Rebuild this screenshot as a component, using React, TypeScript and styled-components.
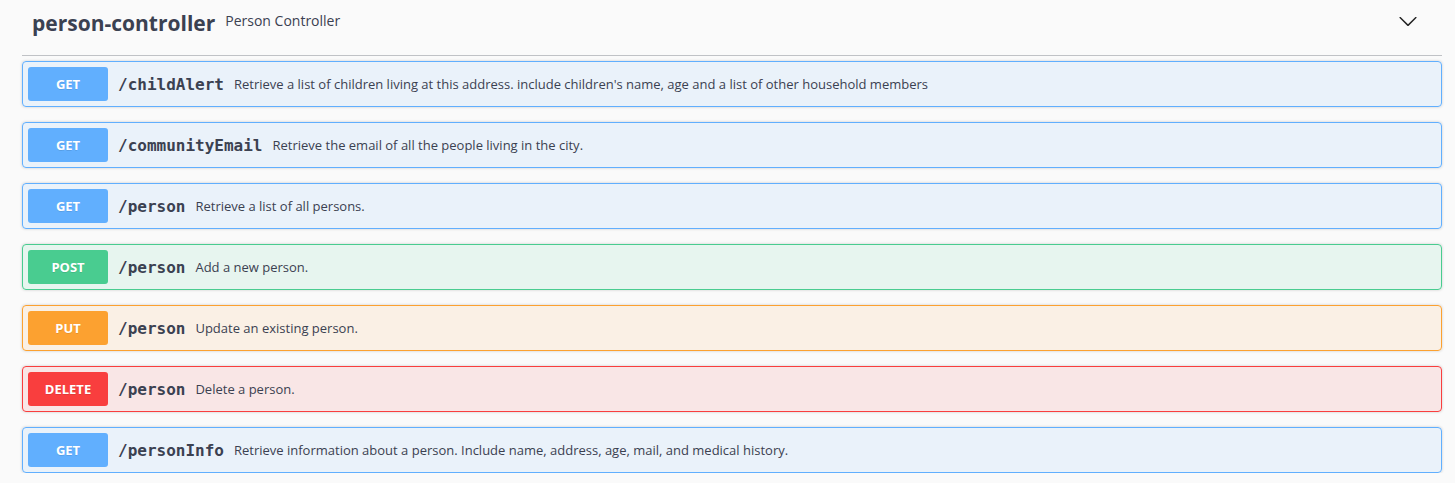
import styled, { createGlobalStyle } from 'styled-components'

const GlobalStyle = createGlobalStyle`
  html, body {
    margin: 0;
    padding: 0;
    background: #fafafa;
  }
  body {
    font-family: "Open Sans", "Noto Sans", sans-serif;
    color: #3b4151;
  }
`

type Method = 'GET' | 'POST' | 'PUT' | 'DELETE'

const colors: Record<Method, string> = {
  GET: '97,175,254',
  POST: '73,204,144',
  PUT: '252,161,48',
  DELETE: '249,62,62',
}

const ops: { method: Method; path: string; desc: string }[] = [
  { method: 'GET', path: '/childAlert', desc: "Retrieve a list of children living at this address. include children's name, age and a list of other household members" },
  { method: 'GET', path: '/communityEmail', desc: 'Retrieve the email of all the people living in the city.' },
  { method: 'GET', path: '/person', desc: 'Retrieve a list of all persons.' },
  { method: 'POST', path: '/person', desc: 'Add a new person.' },
  { method: 'PUT', path: '/person', desc: 'Update an existing person.' },
  { method: 'DELETE', path: '/person', desc: 'Delete a person.' },
  { method: 'GET', path: '/personInfo', desc: 'Retrieve information about a person. Include name, address, age, mail, and medical history.' },
]

const App = () => {
  return (
    <Page>
      <GlobalStyle />
      <Section>
        <TagHeader>
          <TagTitle>person-controller</TagTitle>
          <TagSmall>Person Controller</TagSmall>
          <Spacer />
          <Toggle>
            <svg width="20" height="20" viewBox="0 0 20 20">
              <path
                fill="#222"
                d="M17.418 6.109c.272-.268.709-.268.979 0s.271.701 0 .969l-7.908 7.83c-.27.268-.707.268-.979 0l-7.908-7.83c-.27-.268-.27-.701 0-.969.271-.268.709-.268.979 0L10 13.25l7.418-7.141z"
              />
            </svg>
          </Toggle>
        </TagHeader>
        <List>
          {ops.map((op, i) => (
            <Block key={i} $rgb={colors[op.method]}>
              <MethodBadge $rgb={colors[op.method]}>{op.method}</MethodBadge>
              <Path>{op.path}</Path>
              <Desc>{op.desc}</Desc>
            </Block>
          ))}
        </List>
      </Section>
    </Page>
  )
}

export default App

const Page = styled.div`
  padding-left: 22px;
  width: 1420px;
`

const Section = styled.div`
  display: flex;
  flex-direction: column;
`

const TagHeader = styled.div`
  height: 55px;
  display: flex;
  align-items: center;
  padding: 0 24px 0 10px;
  border-bottom: 1px solid rgba(59, 65, 81, 0.3);
  margin-bottom: 5px;
`

const TagTitle = styled.span`
  font-size: 21px;
  font-weight: 700;
  color: #3b4151;
  margin-top: -10px;
`

const TagSmall = styled.span`
  font-size: 14px;
  color: #3b4151;
  padding: 0 10px;
  margin-top: -14px;
`

const Spacer = styled.div`
  flex: 1;
`

const Toggle = styled.div`
  display: flex;
  margin-top: -14px;
`

const List = styled.div`
  display: flex;
  flex-direction: column;
  gap: 15px;
`

const Block = styled.div<{ $rgb: string }>`
  display: flex;
  align-items: center;
  padding: 5px;
  border: 1px solid rgb(${(p) => p.$rgb});
  background: rgba(${(p) => p.$rgb}, 0.1);
  border-radius: 4px;
  box-shadow: 0 0 3px rgba(0, 0, 0, 0.19);
`

const MethodBadge = styled.div<{ $rgb: string }>`
  width: 80px;
  height: 34px;
  display: flex;
  align-items: center;
  justify-content: center;
  background: rgb(${(p) => p.$rgb});
  border-radius: 3px;
  color: #fff;
  font-size: 13px;
  font-weight: 700;
  text-shadow: 0 1px 0 rgba(0, 0, 0, 0.1);
`

const Path = styled.span`
  font-family: "DejaVu Sans Mono", monospace;
  font-size: 16px;
  font-weight: 600;
  color: #3b4151;
  padding: 0 10px;
`

const Desc = styled.span`
  font-size: 13px;
  color: #3b4151;
`
